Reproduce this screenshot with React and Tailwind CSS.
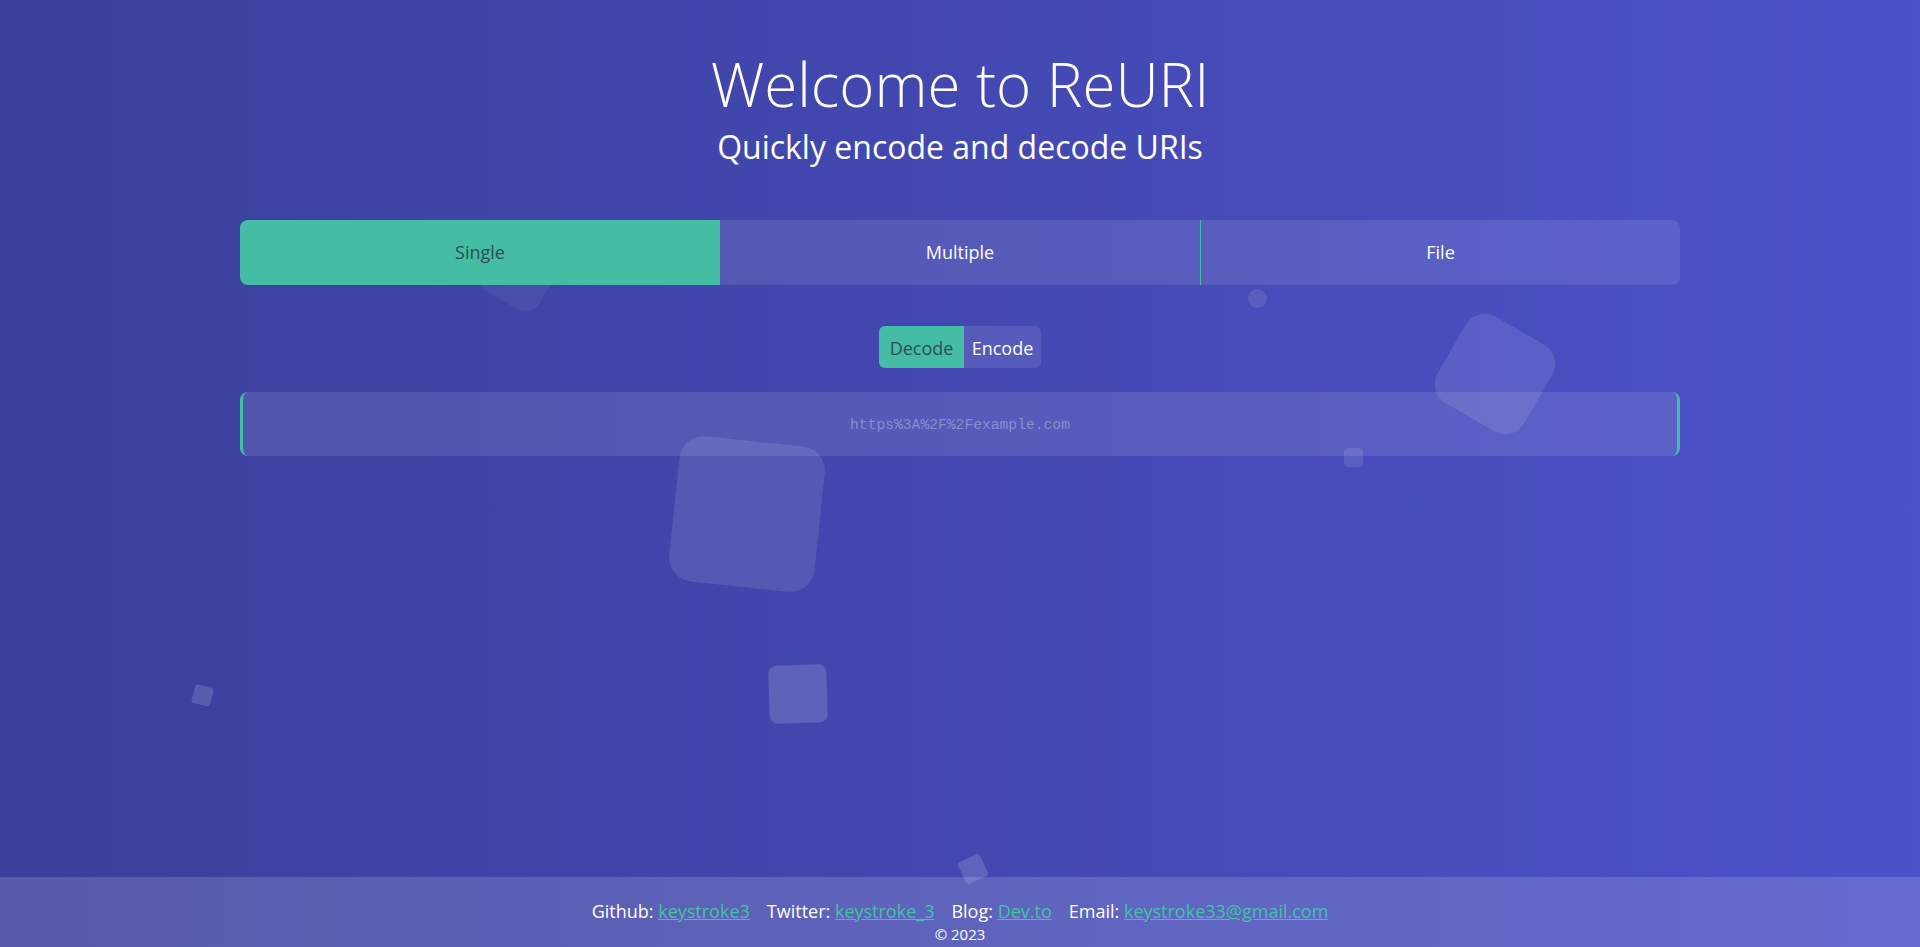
import { useState } from 'react';

const sans = { fontFamily: '"Open Sans", "Noto Sans", sans-serif' };
const mono = { fontFamily: '"Liberation Mono", "DejaVu Sans Mono", monospace' };

// Floating background squares
function Bubbles() {
  return (
    <div className="absolute inset-0 overflow-hidden pointer-events-none">
      <div className="absolute left-[485px] top-[237px] w-[68px] h-[68px] rounded-[16px] bg-white/5 rotate-[30deg]" />
      <div className="absolute left-[674px] top-[441px] w-[146px] h-[146px] rounded-[24px] bg-white/10 rotate-[6deg]" />
      <div className="absolute left-[769px] top-[665px] w-[58px] h-[58px] rounded-[8px] bg-white/15 -rotate-2" />
      <div className="absolute left-[1445px] top-[324px] w-[100px] h-[100px] rounded-[22px] bg-white/10 rotate-[30deg]" />
      <div className="absolute left-[1248px] top-[289px] w-[19px] h-[19px] rounded-full bg-white/10" />
      <div className="absolute left-[1344px] top-[448px] w-[19px] h-[19px] rounded-[4px] bg-white/10" />
      <div className="absolute left-[193px] top-[686px] w-[19px] h-[19px] rounded-[3px] bg-white/15 rotate-[15deg]" />
      <div className="absolute left-[961px] top-[857px] w-[24px] h-[24px] rounded-[3px] bg-white/15 -rotate-[25deg]" />
    </div>
  );
}

export default function App() {
  const [tab, setTab] = useState('single');
  const [mode, setMode] = useState('decode');
  const [value, setValue] = useState('');

  const tabs = [
    { id: 'single', label: 'Single' },
    { id: 'multiple', label: 'Multiple' },
    { id: 'file', label: 'File' },
  ];

  return (
    <div
      className="relative min-h-screen flex flex-col bg-gradient-to-r from-[#3b3f9b] to-[#4b52c8] text-white overflow-hidden"
      style={sans}
    >
      <Bubbles />

      <main className="relative flex-1 flex flex-col items-center pt-[54px]">
        {/* Header */}
        <h1 className="text-[60px] leading-none font-light">Welcome to ReURI</h1>
        <h2 className="mt-[17px] text-[32px] leading-none">Quickly encode and decode URIs</h2>

        {/* Tabs */}
        <div className="mt-[57px] w-[1440px] h-[65px] flex rounded-lg overflow-hidden">
          {tabs.map((t) => (
            <button
              key={t.id}
              onClick={() => setTab(t.id)}
              className={`w-[480px] shrink-0 text-[18px] ${
                tab === t.id ? 'bg-[#45bca4] text-[#2f4f4f]' : 'bg-white/10 text-white'
              } ${t.id === 'file' ? 'border-l border-[#45bca4]' : ''}`}
            >
              {t.label}
            </button>
          ))}
        </div>

        {/* Decode / Encode toggle */}
        <div className="mt-[41px] flex h-[42px] rounded-md overflow-hidden text-[18px]">
          <button
            onClick={() => setMode('decode')}
            className={`w-[85px] pt-[2px] ${mode === 'decode' ? 'bg-[#45bca4] text-[#2f4f4f]' : 'bg-white/10 text-white'}`}
          >
            Decode
          </button>
          <button
            onClick={() => setMode('encode')}
            className={`w-[77px] pt-[2px] ${mode === 'encode' ? 'bg-[#45bca4] text-[#2f4f4f]' : 'bg-white/10 text-white'}`}
          >
            Encode
          </button>
        </div>

        {/* Input */}
        <input
          value={value}
          onChange={(e) => setValue(e.target.value)}
          placeholder={mode === 'decode' ? 'https%3A%2F%2Fexample.com' : 'https://example.com'}
          className="mt-[24px] w-[1440px] h-[64px] rounded-lg border-x-[3px] border-[#45bca4] bg-white/10 text-center text-[14.67px] text-white placeholder:text-[#8a8fcc] outline-none pt-[2px]"
          style={mono}
        />
      </main>

      {/* Footer */}
      <footer className="relative h-[70px] bg-white/15 flex flex-col items-center pt-[22px]">
        <div className="flex gap-[17px] text-[18px] leading-[24px]">
          <span>
            Github: <a href="#" className="text-[#42c3a4] underline">keystroke3</a>
          </span>
          <span>
            Twitter: <a href="#" className="text-[#42c3a4] underline">keystroke_3</a>
          </span>
          <span>
            Blog: <a href="#" className="text-[#42c3a4] underline">Dev.to</a>
          </span>
          <span>
            Email: <a href="#" className="text-[#42c3a4] underline">keystroke33@gmail.com</a>
          </span>
        </div>
        <div className="text-[15px] leading-[20px] mt-[1px]">© 2023</div>
      </footer>
    </div>
  );
}
